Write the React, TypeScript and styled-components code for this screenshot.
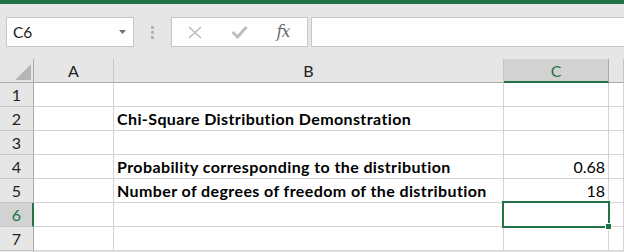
import React from 'react'
import styled, { createGlobalStyle } from 'styled-components';

const GREEN = '#217346';

const GlobalStyle = createGlobalStyle`
    * { box-sizing: border-box; }
    body {
        margin: 0;
        background: #e6e6e6;
        font-family: Lato, "Open Sans", sans-serif;
    }
`;

const columns = ['A', 'B', 'C'];

const rows: { b?: string; c?: string }[] = [
    {},
    { b: 'Chi-Square Distribution Demonstration' },
    {},
    { b: 'Probability corresponding to the distribution', c: '0.68' },
    { b: 'Number of degrees of freedom of the distribution', c: '18' },
    {},
    {},
];

const selectedCol = 'C';
const selectedRow = 6;

const App: React.FC = () => {
    return (
        <Page>
            <GlobalStyle />
            <TitleStrip />
            <FormulaBar>
                <NameBox>
                    <span>C6</span>
                    <svg width="7" height="4" viewBox="0 0 7 4">
                        <polygon points="0,0 7,0 3.5,4" fill="#6e6e6e" />
                    </svg>
                </NameBox>
                <Grip>
                    <i /><i /><i />
                </Grip>
                <FxButtons>
                    <FxButton>
                        <svg width="14" height="13" viewBox="0 0 14 13">
                            <path d="M1 1 L13 12 M13 1 L1 12" stroke="#bababa" strokeWidth="1.5" fill="none" />
                        </svg>
                    </FxButton>
                    <FxButton>
                        <svg width="17" height="14" viewBox="0 0 17 14">
                            <polyline points="1.5,7 6.5,12 15.5,2" stroke="#bdbdbd" strokeWidth="3" fill="none" />
                        </svg>
                    </FxButton>
                    <FxButton>
                        <FxLabel>fx</FxLabel>
                    </FxButton>
                </FxButtons>
                <FormulaInput />
            </FormulaBar>
            <Sheet>
                <Corner>
                    <svg width="16" height="16" viewBox="0 0 16 16">
                        <polygon points="16,0 16,16 0,16" fill="#b5b5b5" />
                    </svg>
                </Corner>
                {columns.map((c) => (
                    <ColHeader key={c} $active={c === selectedCol}>{c}</ColHeader>
                ))}
                <ColHeader $active={false} />
                {rows.map((r, i) => {
                    const n = i + 1;
                    return (
                        <React.Fragment key={n}>
                            <RowHeader $active={n === selectedRow}>{n}</RowHeader>
                            <Cell />
                            <Cell $bold>{r.b}</Cell>
                            <Cell $right>
                                {r.c}
                                {n === selectedRow && (
                                    <Selection>
                                        <FillHandle />
                                    </Selection>
                                )}
                            </Cell>
                            <Cell />
                        </React.Fragment>
                    );
                })}
            </Sheet>
        </Page>
    );
};

export default App

const Page = styled.div`
    width: 100%;
    height: 252px;
    overflow: hidden;
    background: #e6e6e6;
`;

const TitleStrip = styled.div`
    height: 4px;
    background: ${GREEN};
`;

const FormulaBar = styled.div`
    display: flex;
    align-items: center;
    padding: 13px 0 12px 6px;
`;

const NameBox = styled.div`
    width: 128px;
    height: 30px;
    border: 1px solid #c6c6c6;
    background: #fff;
    display: flex;
    align-items: center;
    justify-content: space-between;
    padding: 0 7px 0 6px;
    font-size: 15.5px;
    color: #222;
`;

const Grip = styled.div`
    display: flex;
    flex-direction: column;
    gap: 2px;
    margin-left: 17px;
    i {
        display: block;
        width: 3px;
        height: 3px;
        background: #b4b4b4;
    }
`;

const FxButtons = styled.div`
    margin-left: 17px;
    width: 137px;
    height: 30px;
    border: 1px solid #c6c6c6;
    background: #fff;
    display: grid;
    grid-template-columns: repeat(3, 44px);
    padding-left: 1px;
`;

const FxButton = styled.div`
    display: flex;
    align-items: center;
    justify-content: center;
`;

const FxLabel = styled.span`
    font-family: "DejaVu Serif", serif;
    font-style: italic;
    font-size: 16px;
    color: #6a6a6a;
    letter-spacing: -1px;
    padding-bottom: 1px;
`;

const FormulaInput = styled.div`
    flex: 1;
    margin-left: 3px;
    margin-right: -2px;
    height: 30px;
    border: 1px solid #c6c6c6;
    background: #fff;
`;

const Sheet = styled.div`
    display: grid;
    grid-template-columns: 34px 80px 390px 105px 1fr;
    grid-auto-rows: 24px;
    background: #fff;
    font-size: 16px;
    line-height: 23px;
`;

const Corner = styled.div`
    background: #e6e6e6;
    border-right: 1px solid #ababab;
    border-bottom: 1px solid #ababab;
    display: flex;
    justify-content: flex-end;
    align-items: flex-end;
    padding: 0 2px 2px 0;
    svg { display: block; }
`;

const ColHeader = styled.div<{ $active: boolean }>`
    background: ${(p) => (p.$active ? '#d2d2d2' : '#e6e6e6')};
    border-right: 1px solid ${(p) => (p.$active ? '#ababab' : '#c6c6c6')};
    border-bottom: ${(p) => (p.$active ? `2px solid ${GREEN}` : '1px solid #ababab')};
    color: ${(p) => (p.$active ? GREEN : '#222')};
    text-align: center;
`;

const RowHeader = styled.div<{ $active: boolean }>`
    background: ${(p) => (p.$active ? '#d2d2d2' : '#e6e6e6')};
    border-right: ${(p) => (p.$active ? `2px solid ${GREEN}` : '1px solid #ababab')};
    border-bottom: 1px solid #c6c6c6;
    color: ${(p) => (p.$active ? GREEN : '#222')};
    text-align: center;
    padding-left: ${(p) => (p.$active ? '1px' : '0')};
`;

const Cell = styled.div<{ $bold?: boolean; $right?: boolean }>`
    position: relative;
    border-right: 1px solid #d4d4d4;
    border-bottom: 1px solid #d4d4d4;
    padding: 0 3px;
    white-space: nowrap;
    color: #000;
    font-weight: ${(p) => (p.$bold ? 700 : 400)};
    letter-spacing: ${(p) => (p.$bold ? '0.4px' : '0')};
    text-align: ${(p) => (p.$right ? 'right' : 'left')};
`;

const Selection = styled.div`
    position: absolute;
    z-index: 2;
    top: -2px;
    left: -2px;
    right: -2px;
    bottom: -2px;
    border: 2px solid ${GREEN};
`;

const FillHandle = styled.div`
    position: absolute;
    right: -4px;
    bottom: -4px;
    width: 7px;
    height: 7px;
    background: ${GREEN};
    border: 1px solid #fff;
`;
